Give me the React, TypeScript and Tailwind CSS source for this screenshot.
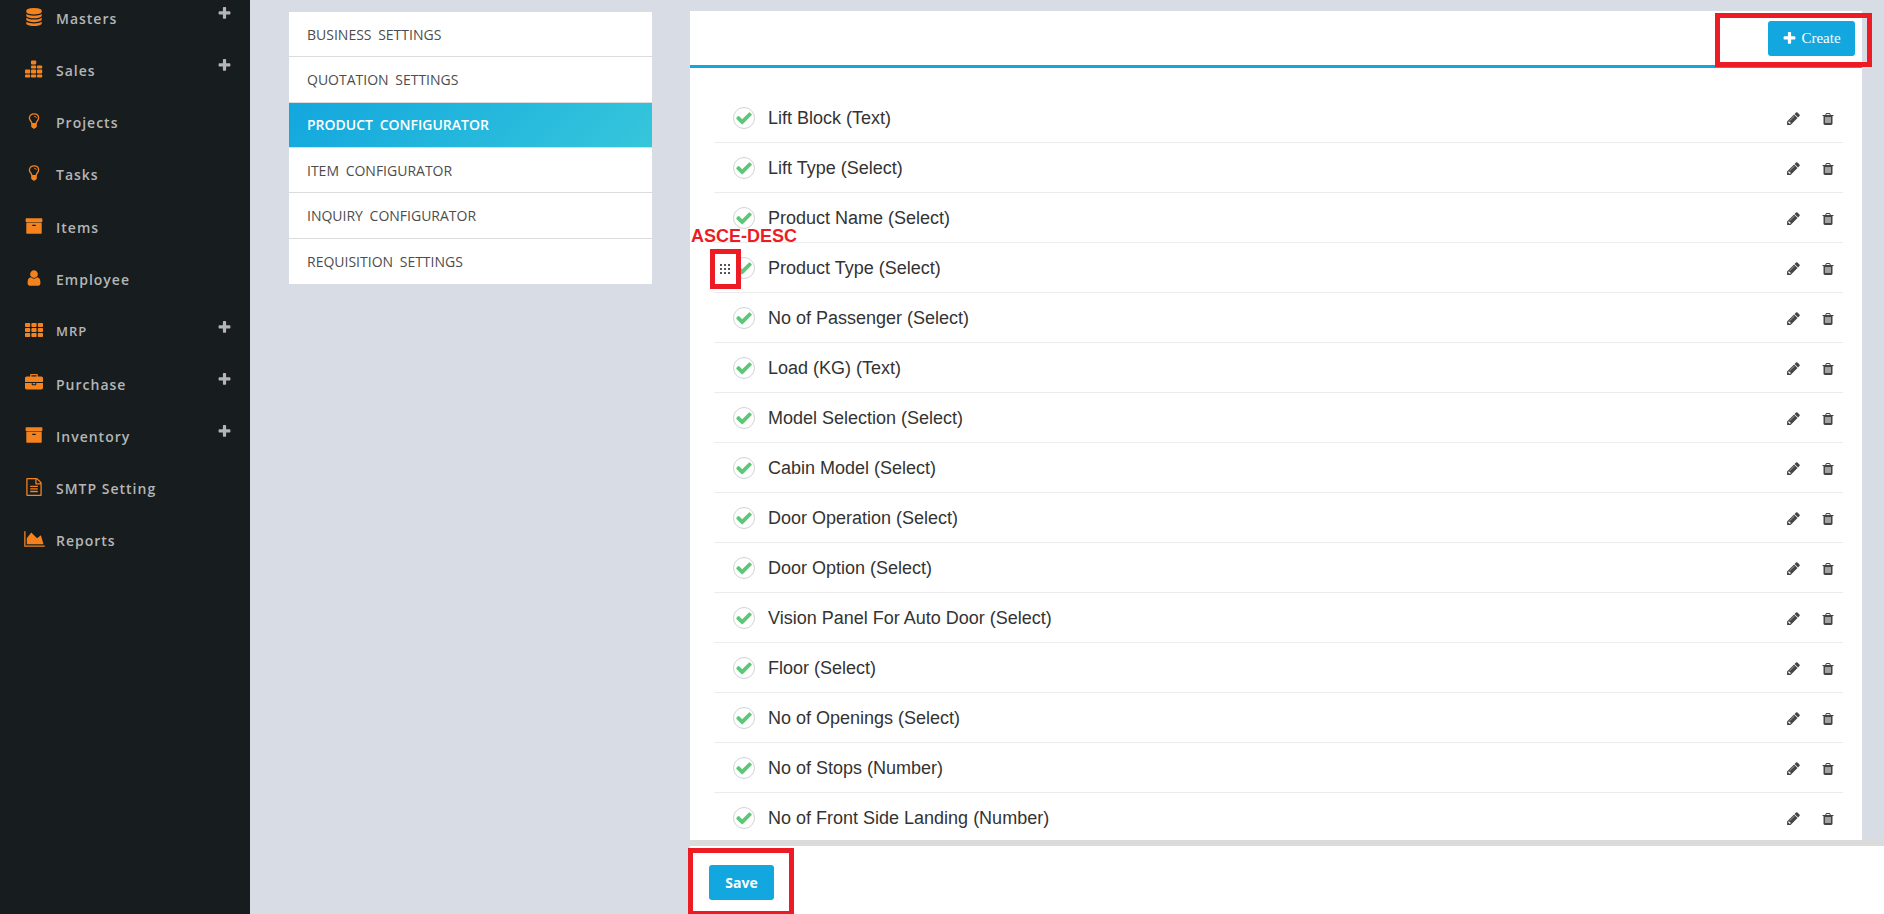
import { useState, type ReactNode } from "react";

const PATHS = {
  plus: "M1600 736v192q0 40-28 68t-68 28h-416v416q0 40-28 68t-68 28h-192q-40 0-68-28t-28-68v-416h-416q-40 0-68-28t-28-68v-192q0-40 28-68t68-28h416v-416q0-40 28-68t68-28h192q40 0 68 28t28 68v416h416q40 0 68 28t28 68z",
  check:
    "M1671 566q0 40-28 68l-724 724-136 136q-28 28-68 28t-68-28l-136-136-362-362q-28-28-28-68t28-68l136-136q28-28 68-28t68 28l294 295 656-657q28-28 68-28t68 28l136 136q28 28 28 68z",
  database:
    "M896 768q237 0 443-43t325-127v170q0 69-103 128t-280 93.500-385 34.500-385-34.500-280-93.500-103-128v-170q119 84 325 127t443 43zm0 768q237 0 443-43t325-127v170q0 69-103 128t-280 93.500-385 34.500-385-34.500-280-93.500-103-128v-170q119 84 325 127t443 43zm0-384q237 0 443-43t325-127v170q0 69-103 128t-280 93.500-385 34.500-385-34.500-280-93.500-103-128v-170q119 84 325 127t443 43zm0-1152q208 0 385 34.500t280 93.500 103 128v128q0 69-103 128t-280 93.500-385 34.500-385-34.500-280-93.500-103-128v-128q0-69 103-128t280-93.500 385-34.500z",
  archive:
    "M1088 832q0-26-19-45t-45-19h-256q-26 0-45 19t-19 45 19 45 45 19h256q26 0 45-19t19-45zm576-192v960q0 26-19 45t-45 19h-1408q-26 0-45-19t-19-45v-960q0-26 19-45t45-19h1408q26 0 45 19t19 45zm64-448v256q0 26-19 45t-45 19h-1536q-26 0-45-19t-19-45v-256q0-26 19-45t45-19h1536q26 0 45 19t19 45z",
  user: "M1536 1399q0 109-62.500 187t-150.500 78h-854q-88 0-150.500-78t-62.500-187q0-85 8.500-160.500t31.500-152 58.500-131 94-89 134.500-34.500q131 128 313 128t313-128q76 0 134.500 34.500t94 89 58.500 131 31.500 152 8.500 160.500zm-256-887q0 159-112.500 271.500t-271.500 112.500-271.500-112.500-112.500-271.500 112.500-271.500 271.500-112.500 271.500 112.500 112.500 271.500z",
  briefcase:
    "M640 256h512v-128h-512v128zm1152 640v480q0 66-47 113t-113 47h-1472q-66 0-113-47t-47-113v-480h672v160q0 26 19 45t45 19h320q26 0 45-19t19-45v-160h672zm-768 0v128h-256v-128h256zm768-480v384h-1792v-384q0-66 47-113t113-47h352v-160q0-40 28-68t68-28h576q40 0 68 28t28 68v160h352q66 0 113 47t47 113z",
  file: "M1596 380q28 28 48 76t20 88v1152q0 40-28 68t-68 28h-1344q-40 0-68-28t-28-68v-1600q0-40 28-68t68-28h896q40 0 88 20t76 48zm-444-244v376h376q-10-29-22-41l-313-313q-12-12-41-22zm384 1528v-1024h-416q-40 0-68-28t-28-68v-416h-768v1536h1280zm-1024-864q0-14 9-23t23-9h704q14 0 23 9t9 23v64q0 14-9 23t-23 9h-704q-14 0-23-9t-9-23v-64zm736 224q14 0 23 9t9 23v64q0 14-9 23t-23 9h-704q-14 0-23-9t-9-23v-64q0-14 9-23t23-9h704zm0 256q14 0 23 9t9 23v64q0 14-9 23t-23 9h-704q-14 0-23-9t-9-23v-64q0-14 9-23t23-9h704z",
  pencil:
    "M491 1536l91-91-235-235-91 91v107h128v128h107zm523-928q0-22-22-22-10 0-17 7l-542 542q-7 7-7 17 0 22 22 22 10 0 17-7l542-542q7-7 7-17zm-54-192l416 416-832 832h-416v-416zm683 96q0 53-37 90l-166 166-416-416 166-165q36-38 90-38 53 0 91 38l235 234q37 39 37 91z",
  trash:
    "M704 1376v-704q0-14-9-23t-23-9h-64q-14 0-23 9t-9 23v704q0 14 9 23t23 9h64q14 0 23-9t9-23zm256 0v-704q0-14-9-23t-23-9h-64q-14 0-23 9t-9 23v704q0 14 9 23t23 9h64q14 0 23-9t9-23zm256 0v-704q0-14-9-23t-23-9h-64q-14 0-23 9t-9 23v704q0 14 9 23t23 9h64q14 0 23-9t9-23zm-544-992h448l-48-117q-7-9-17-11h-317q-10 2-17 11zm928 32v64q0 14-9 23t-23 9h-96v948q0 83-47 143.500t-113 60.500h-832q-66 0-113-58.500t-47-141.500v-952h-96q-14 0-23-9t-9-23v-64q0-14 9-23t23-9h309l70-167q15-37 54-63t79-26h320q40 0 79 26t54 63l70 167h309q14 0 23 9t9 23z",
};

function Glyph({ name, className }: { name: keyof typeof PATHS; className: string }) {
  return (
    <svg viewBox="0 0 1792 1792" fill="currentColor" aria-hidden="true" className={className}>
      <path d={PATHS[name]} />
    </svg>
  );
}

function Blocks({ cells }: { cells: number[][] }) {
  return (
    <svg viewBox="0 0 18 18" fill="currentColor" aria-hidden="true" className="size-[18px]">
      {cells.map(([x, y, h]) => (
        <rect key={`${x}-${y}`} x={x} y={y} width="5.2" height={h} rx="0.8" />
      ))}
    </svg>
  );
}

const BARS = [
  [6, 0.4, 4], [6, 5.6, 3], [12, 5.6, 3], [0, 9.6, 4], [6, 9.6, 4], [12, 9.6, 4], [0, 14.6, 3], [6, 14.6, 3], [12, 14.6, 3],
];
const GRID = [
  [0, 2, 4], [6.4, 2, 4], [12.8, 2, 4], [0, 7, 4], [6.4, 7, 4], [12.8, 7, 4], [0, 12, 4], [6.4, 12, 4], [12.8, 12, 4],
];

function Bulb() {
  return (
    <svg viewBox="0 0 18 18" fill="none" stroke="currentColor" strokeWidth="1.3" aria-hidden="true" className="size-[18px]">
      <path d="M7 11.800C6.900 9.300 4.400 8.600 4.400 5.900C4.400 3.300 6.500 1.900 9 1.900S13.600 3.300 13.600 5.900C13.600 8.600 11.100 9.300 11 11.800" />
      <path d="M9.200 4.300c1.300 0 2.100 .7 2.100 1.700" strokeWidth="1" />
      <path d="M6.200 10.900h5.600v3.900l-1.200 1.200h-.5l-.5.700h-1.200l-.5-.7h-.5l-1.200-1.200z" fill="currentColor" stroke="none" />
    </svg>
  );
}

function AreaChart() {
  return (
    <svg viewBox="0 0 2048 1792" fill="currentColor" aria-hidden="true" className="h-[18px] w-[21px] shrink-0">
      <path d="M2048 1536v128h-2048v-1536h128v1408h1920zm-384-1024l256 896h-1664v-576l448-576 576 576z" />
    </svg>
  );
}

function Dots() {
  return (
    <svg viewBox="0 0 11 11" fill="#555" aria-hidden="true" className="size-[11px]">
      {[0, 4, 8].flatMap((y) => [0, 4, 8].map((x) => <rect key={`${x}${y}`} x={x} y={y} width="2" height="2" />))}
    </svg>
  );
}

type NavItem = { label: string; icon: ReactNode; more?: boolean; small?: boolean };

const NAV: NavItem[] = [
  { label: "Masters", icon: <Glyph name="database" className="size-[18px]" />, more: true },
  { label: "Sales", icon: <Blocks cells={BARS} />, more: true },
  { label: "Projects", icon: <Bulb /> },
  { label: "Tasks", icon: <Bulb /> },
  { label: "Items", icon: <Glyph name="archive" className="size-[18px]" /> },
  { label: "Employee", icon: <Glyph name="user" className="size-[18px]" /> },
  { label: "MRP", icon: <Blocks cells={GRID} />, more: true, small: true },
  { label: "Purchase", icon: <Glyph name="briefcase" className="size-[18px]" />, more: true },
  { label: "Inventory", icon: <Glyph name="archive" className="size-[18px]" />, more: true },
  { label: "SMTP Setting", icon: <Glyph name="file" className="size-[18px]" /> },
  { label: "Reports", icon: <AreaChart /> },
];

const SETTINGS = [
  "BUSINESS SETTINGS",
  "QUOTATION SETTINGS",
  "PRODUCT CONFIGURATOR",
  "ITEM CONFIGURATOR",
  "INQUIRY CONFIGURATOR",
  "REQUISITION SETTINGS",
];

const FIELDS = [
  "Lift Block (Text)",
  "Lift Type (Select)",
  "Product Name (Select)",
  "Product Type (Select)",
  "No of Passenger (Select)",
  "Load (KG) (Text)",
  "Model Selection (Select)",
  "Cabin Model (Select)",
  "Door Operation (Select)",
  "Door Option (Select)",
  "Vision Panel For Auto Door (Select)",
  "Floor (Select)",
  "No of Openings (Select)",
  "No of Stops (Number)",
  "No of Front Side Landing (Number)",
];

function Sidebar() {
  return (
    <nav className="w-[250px] shrink-0 overflow-hidden bg-[#171c1f]">
      <ul className="-mt-2 grid h-[575px] auto-rows-fr">
        {NAV.map((item) => (
          <li key={item.label} className="flex">
            <a href="#" className="flex flex-1 items-center pr-[18px] pl-[23px] text-[#b5b5b5]">
              <span className="flex w-[22px] justify-center pb-[3px] text-[#f4821f]">{item.icon}</span>
              <span
                className={`ml-[11px] flex-1 font-semibold tracking-[1px] ${item.small ? "text-[13px]" : "text-[14px]"}`}
              >
                {item.label}
              </span>
              {item.more && <Glyph name="plus" className="mb-[9px] size-[15px]" />}
            </a>
          </li>
        ))}
      </ul>
    </nav>
  );
}

function SettingsMenu() {
  return (
    <ul className="mt-3 grid h-[272px] w-[363px] shrink-0 auto-rows-fr bg-white">
      {SETTINGS.map((label) => (
        <li key={label} className="flex border-b border-[#dcdcdc] last:border-b-0">
          <a
            href="#"
            className={
              label === "PRODUCT CONFIGURATOR"
                ? "flex flex-1 items-center bg-linear-[135deg] from-[#12a7de] to-[#36c6db] px-[18px] text-[14px] font-semibold text-white [word-spacing:3px]"
                : "flex flex-1 items-center px-[18px] text-[14px] font-medium text-[#4d4d4d] [word-spacing:3px]"
            }
          >
            {label}
          </a>
        </li>
      ))}
    </ul>
  );
}

function FieldRow({ label }: { label: string }) {
  const [checked, setChecked] = useState(true);
  const marked = label === "Product Type (Select)";
  return (
    <li className="relative flex h-[50px] items-center border-b border-[#ececec] pr-2 pl-[19px]">
      <label className="flex flex-1 items-center gap-[13px] font-['Liberation_Sans',Arial,sans-serif] text-[18px] text-[#333]">
        <span className="grid size-[22px] place-items-center">
          <input
            type="checkbox"
            checked={checked}
            onChange={() => setChecked(!checked)}
            className="peer col-start-1 row-start-1 size-[22px] appearance-none rounded-full border border-[#d0d3da] bg-white"
          />
          <Glyph
            name="check"
            className="pointer-events-none col-start-1 row-start-1 hidden size-[18px] text-[#5dc777] peer-checked:block"
          />
        </span>
        <span className="pt-[1px]">{label}</span>
      </label>
      <div className="flex items-center gap-5 pt-[2px] text-[#444]">
        <button type="button" aria-label={`Edit ${label}`}>
          <Glyph name="pencil" className="size-[15px]" />
        </button>
        <button type="button" aria-label={`Delete ${label}`}>
          <Glyph name="trash" className="size-[14px]" />
        </button>
      </div>
      {marked && (
        <>
          <span className="absolute -top-[17px] -left-[23px] font-['Liberation_Sans',Arial,sans-serif] text-[18px] leading-[20px] font-bold whitespace-nowrap text-[#ed1c24]">
            ASCE-DESC
          </span>
          <button
            type="button"
            aria-label="Drag to reorder"
            className="absolute top-[6px] -left-1 flex h-10 w-[31px] items-center justify-center border-5 border-[#ed1c24] bg-white"
          >
            <Dots />
          </button>
        </>
      )}
    </li>
  );
}

export default function App() {
  return (
    <div className="flex h-screen overflow-hidden bg-[#d8dce4] font-['Open_Sans','Noto_Sans',sans-serif]">
      <Sidebar />
      <div className="flex min-w-0 flex-1 gap-[38px] pl-[39px]">
        <SettingsMenu />
        <main className="flex min-w-0 flex-1 flex-col">
          <div className="min-h-0 flex-1 overflow-hidden pt-[11px] pr-[22px]">
            <section className="bg-white">
              <header className="flex h-[57px] justify-end border-b-3 border-[#12a7de] pt-[10px] pr-[7px]">
                <div className="relative h-[35px]">
                  <button
                    type="button"
                    className="flex h-[35px] w-[87px] items-center justify-center gap-1 rounded-[3px] bg-[#12a7de] font-['Liberation_Serif','Times_New_Roman',serif] text-[15px] text-white"
                  >
                    <Glyph name="plus" className="size-[15px]" />
                    Create
                  </button>
                  <span className="pointer-events-none absolute -top-2 -right-[17px] -bottom-[11px] -left-[53px] border-5 border-[#ed1c24]" />
                </div>
              </header>
              <ul className="mr-[19px] ml-6 pt-[25px]">
                {FIELDS.map((label) => (
                  <FieldRow key={label} label={label} />
                ))}
              </ul>
            </section>
          </div>
          <footer className="flex h-[74px] shrink-0 items-start border-t-6 border-[#dbdbdb] bg-white pt-[19px] pl-[19px]">
            <div className="relative">
              <button
                type="button"
                className="block h-[35px] w-[65px] rounded-[3px] bg-[#12a7de] text-[14px] font-bold text-white"
              >
                Save
              </button>
              <span className="pointer-events-none absolute -top-[17px] -right-5 -bottom-4 -left-[21px] border-5 border-[#ed1c24]" />
            </div>
          </footer>
        </main>
      </div>
    </div>
  );
}
